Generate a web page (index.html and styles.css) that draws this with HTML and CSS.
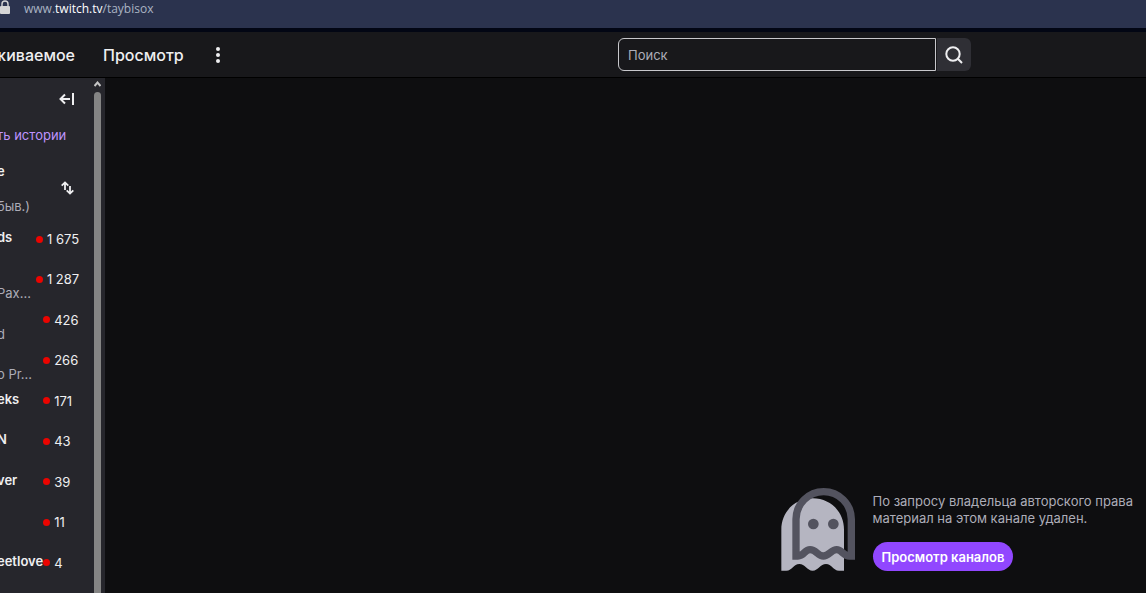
FILE: index.html
```html
<!DOCTYPE html>
<html lang="ru">
<head>
  <meta charset="UTF-8" />
  <title>taybisox - Twitch</title>
  <link rel="stylesheet" href="styles.css">
</head>
<body>

  <div class="address-bar">
    <svg class="lock" width="10" height="14" viewBox="0 0 10 14" aria-hidden="true">
      <path d="M2 7V4a3 3 0 0 1 6 0v3" fill="none" stroke="#d5d5d5" stroke-width="1.4"/>
      <rect y="6" width="10" height="8" rx="1" fill="#d5d5d5"/>
    </svg>
    <span class="url">www.<b>twitch.tv</b>/taybisox</span>
  </div>

  <header class="top-nav">
    <nav class="links">
      <a href="#" class="cut">живаемое</a>
      <a href="#">Просмотр</a>
    </nav>
    <button class="more" aria-label="Ещё">
      <svg width="4" height="16" viewBox="0 0 4 16" fill="#efeff1"><circle cx="2" cy="2" r="2"/><circle cx="2" cy="8" r="2"/><circle cx="2" cy="14" r="2"/></svg>
    </button>
    <form class="search" role="search">
      <input type="search" placeholder="Поиск" aria-label="Поиск">
      <button type="button" aria-label="Найти">
        <svg width="18" height="18" viewBox="0 0 18 18" fill="none" stroke="#efeff1" stroke-width="2"><circle cx="8" cy="8" r="6.7"/><path d="M12.8 12.8l4.2 4.2"/></svg>
      </button>
    </form>
  </header>

  <div class="page">
    <aside class="sidebar">
      <div class="side-content">
        <button class="collapse" aria-label="Свернуть">
          <svg width="15" height="12" viewBox="0 0 15 12" fill="none" stroke="#efeff1" stroke-width="2"><path d="M14 0v12M11 6H2M6 1.500L1.500 6L6 10.500"/></svg>
        </button>
        <a href="#" class="stories">ть истории</a>
        <div class="sort">
          <div>
            <h2>е</h2>
            <p>быв.)</p>
          </div>
          <button aria-label="Сортировать">
            <svg width="13" height="14" viewBox="0 0 13 14" fill="none" stroke="#efeff1" stroke-width="1.8"><path d="M4 9V1.500M.7 4.700L4 1.400L7.300 4.700M9 5v7.500M5.700 9.300L9 12.600L12.300 9.300"/></svg>
          </button>
        </div>
        <ul class="channels">
          <li><div class="info"><b>ds</b></div><span class="viewers">1 675</span></li>
          <li><div class="info"><b>&nbsp;</b><span>Pax...</span></div><span class="viewers">1 287</span></li>
          <li><div class="info"><b>&nbsp;</b><span>d</span></div><span class="viewers">426</span></li>
          <li><div class="info"><b>&nbsp;</b><span>o Pr...</span></div><span class="viewers">266</span></li>
          <li><div class="info"><b>eks</b></div><span class="viewers">171</span></li>
          <li><div class="info"><b>N</b></div><span class="viewers">43</span></li>
          <li><div class="info"><b>ver</b></div><span class="viewers">39</span></li>
          <li><div class="info"></div><span class="viewers">11</span></li>
          <li><div class="info"><b>eetlove</b></div><span class="viewers">4</span></li>
        </ul>
      </div>
      <div class="scrollbar">
        <svg width="7" height="6" viewBox="0 0 7 6" fill="none" stroke="#c5c5c5" stroke-width="2"><path d="M.5 5L3.500 1.500L6.500 5"/></svg>
        <div class="thumb"></div>
      </div>
    </aside>

    <main class="channel">
      <section class="removed">
        <svg class="ghost" width="74" height="83" viewBox="33 39 222 249">
          <path fill="#b5b5c1" d="M34 287V164C34 110 75 70 128 70C181 70 222 110 222 164V287H207C189 287 185 267 168 267C151 267 145 287 128 287C111 287 105 267 88 267C71 267 67 287 49 287Z"/>
          <path fill="none" stroke="#53535f" stroke-width="22" d="M78 243V133A83 83 0 0 1 244 133V243H238C220 243 216 224 200 224C184 224 176 243 160 243C144 243 138 224 120 224C104 224 102 243 84 243Z"/>
          <g fill="#53535f"><circle cx="130" cy="147" r="16"/><circle cx="190" cy="147" r="16"/></g>
        </svg>
        <div class="notice">
          <p>По запросу владельца авторского права<br>материал на этом канале удален.</p>
          <button>Просмотр каналов</button>
        </div>
      </section>
    </main>
  </div>

</body>
</html>
```

FILE: styles.css
```css
* {
  margin: 0; padding: 0; box-sizing: border-box;
}
body {
  display: flex;
  flex-direction: column;
  min-height: 100vh;
  font-family: Inter, "Liberation Sans", sans-serif;
  font-size: 13px;
  background: #0e0e10;
  color: #efeff1;
  overflow: hidden;
}
button {
  border: none;
  background: none;
  font-family: inherit;
  cursor: pointer;
}
a {
  color: inherit;
  text-decoration: none;
}
svg {
  display: block;
}

/* Browser address bar */
.address-bar {
  display: flex;
  gap: 14px;
  height: 32px;
  background: #2b334e;
  border-bottom: 4px solid #020614;
}
.url {
  font-family: "Open Sans", sans-serif;
  font-size: 12px;
  line-height: 17px;
  color: #aab4c3;
}
.url b {
  font-weight: 400;
  color: #fff;
}

/* Top navigation */
.top-nav {
  display: flex;
  align-items: center;
  height: 46px;
  background: #18181b;
  border-bottom: 1px solid #000;
}
.links {
  display: flex;
  gap: 28px;
  font-size: 16px;
  font-weight: 500;
}
.cut {
  display: flex;
  justify-content: flex-end;
  width: 75px;
}
.more {
  margin-left: 32px;
}
.search {
  display: flex;
  gap: 1px;
  width: 353px;
  height: 33px;
  margin-left: auto;
  margin-right: 175px;
}
.search input {
  flex: 1;
  min-width: 0;
  padding: 0 9px;
  border: 1px solid #c8c8cc;
  border-radius: 6px 0 0 6px;
  background: #18181b;
  color: #efeff1;
  font-family: inherit;
  font-size: 13px;
}
.search input::placeholder {
  color: #adadb8;
}
.search button {
  display: flex;
  align-items: center;
  justify-content: center;
  width: 34px;
  border-radius: 0 6px 6px 0;
  background: #2f2f35;
}

.page {
  display: flex;
  flex: 1;
}

/* Sidebar */
.sidebar {
  display: flex;
  width: 105px;
  background: #26262c;
}
.side-content {
  flex: 1;
  min-width: 0;
  margin-left: -3px;
}
.collapse {
  display: block;
  margin: 15px 0 0 62px;
}
.stories {
  display: block;
  margin-top: 21px;
  line-height: 18px;
  color: #bf94ff;
}
.sort {
  display: flex;
  align-items: center;
  justify-content: space-between;
  margin-top: 17px;
  padding-right: 20px;
}
.sort h2 {
  font-size: 13px;
  font-weight: 600;
  line-height: 20px;
}
.sort p {
  margin-top: 16px;
  line-height: 18px;
  color: #adadb8;
}
.channels {
  display: grid;
  grid-auto-rows: 1fr;
  height: 364px;
  margin-top: 4px;
  list-style: none;
}
.channels li {
  display: flex;
  min-height: 0;
  padding: 10px 18px 0 0;
}
.info {
  display: flex;
  flex-direction: column;
  line-height: 16px;
}
.info b {
  font-weight: 600;
}
.info span {
  color: #adadb8;
}
.viewers {
  display: flex;
  align-items: center;
  gap: 4px;
  min-width: 36px;
  height: 20px;
  margin-left: auto;
  white-space: nowrap;
}
.viewers::before {
  content: "";
  width: 7px;
  height: 7px;
  border-radius: 50%;
  background: #eb0400;
}
.scrollbar {
  display: flex;
  flex-direction: column;
  align-items: center;
  gap: 5px;
  width: 7px;
  margin-right: 4px;
  padding-top: 3px;
}
.thumb {
  flex: 1;
  width: 7px;
  border-radius: 4px 4px 0 0;
  background: #848484;
}

/* Removed channel notice */
.channel {
  display: flex;
  flex: 1;
  align-items: flex-end;
  justify-content: flex-end;
  padding: 22px 13px;
}
.removed {
  display: flex;
  gap: 18px;
}
.notice p {
  margin: 5px 0 15px;
  line-height: 17px;
  color: #adadb8;
}
.notice button {
  height: 29px;
  padding: 0 9px;
  border-radius: 15px;
  background: #9147ff;
  color: #fff;
  font-size: 13px;
  font-weight: 600;
}
```
